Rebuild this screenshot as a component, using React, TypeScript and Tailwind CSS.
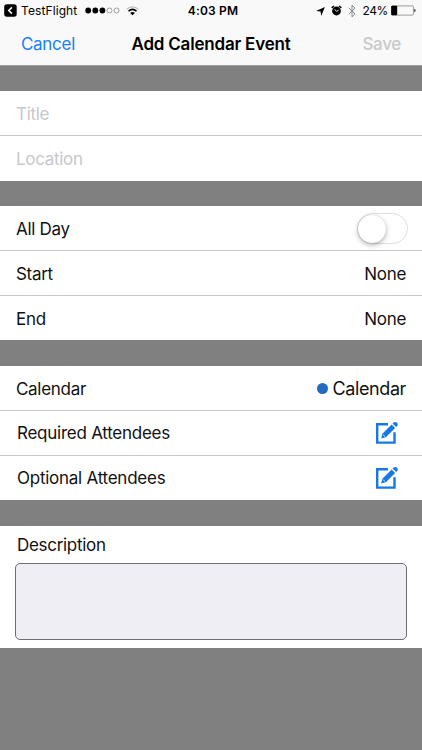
import type { ReactNode } from "react";
import { clsx } from "clsx";

function Row({ className, children }: { className?: string; children: ReactNode }) {
  return (
    <div
      className={clsx(
        "flex h-[45px] items-center justify-between border-b border-[#c8c8c8] pt-px pr-4 pl-4 last:h-[44px] last:border-b-0",
        className,
      )}
    >
      {children}
    </div>
  );
}

function Section({ children }: { children: ReactNode }) {
  return <section className="mb-[26px] bg-white">{children}</section>;
}

function Wifi() {
  return (
    <svg width="13" height="10" viewBox="0 0 13 10" fill="none">
      <path d="M.7 3.2C4 .1 9 .1 12.3 3.2" stroke="#bdbdbd" strokeWidth="1.3" />
      <path d="M2.5 5.1c2.4-2.1 5.6-2.1 8 0" stroke="#000" strokeWidth="1.5" />
      <path d="M4.1 6.9c1.5-1.3 3.3-1.3 4.8 0L6.5 9.3z" fill="#000" />
    </svg>
  );
}

function StatusBar() {
  return (
    <div className="grid h-[22px] grid-cols-[1fr_auto_1fr] items-center pr-1.5 pl-1 text-[12px] leading-none">
      <div className="flex items-center">
        <svg className="-mt-[2px]" width="13" height="13" viewBox="0 0 13 13" fill="none">
          <rect width="12.5" height="12.5" x=".2" y=".2" rx="2.6" fill="#000" />
          <path d="M7.9 3.4 4.8 6.5l3.1 3.1" stroke="#fff" strokeWidth="1.6" />
        </svg>
        <span className="ml-1 w-[56px] tracking-[0.1px] whitespace-nowrap">TestFlight</span>
        <svg className="-mt-[1px] ml-[8px]" width="35" height="7" viewBox="0 0 35 7">
          <circle cx="3.2" cy="3.5" r="2.9" />
          <circle cx="10.3" cy="3.5" r="2.9" />
          <circle cx="17.4" cy="3.5" r="2.9" />
          <circle cx="24.5" cy="3.5" r="2.5" fill="none" stroke="#777" strokeWidth=".7" />
          <circle cx="31.6" cy="3.5" r="2.5" fill="none" stroke="#777" strokeWidth=".7" />
        </svg>
        <span className="-mt-[1px] ml-[6px]">
          <Wifi />
        </span>
      </div>
      <span className="pl-[6px] font-semibold tracking-[0.15px]">4:03 PM</span>
      <div className="flex items-center justify-end">
        <svg width="9" height="9" viewBox="0 0 9 9">
          <path d="M8.9.1 5.2 8.9 4.6 4.5.1 3.9z" />
        </svg>
        <svg className="-mt-[1px] ml-[6px]" width="11" height="11" viewBox="0 0 11 11" fill="none">
          <circle cx="5.5" cy="6" r="4.4" fill="#000" />
          <path d="M.7 2.9 3 1M10.3 2.9 8 1" stroke="#000" strokeWidth="1.5" />
          <path d="m3.6 4.4 2 1.9 2-1.1" stroke="#fff" strokeWidth=".9" />
        </svg>
        <svg className="ml-[6px]" width="8" height="14" viewBox="0 0 8 14" fill="none">
          <path d="m.8 3.8 6.2 6.1L4 12.8V1.2l3 2.9-6.2 6.1" stroke="#858585" strokeWidth="1" />
        </svg>
        <span className="ml-[7px] tracking-[-0.4px]">24%</span>
        <svg className="-mt-px ml-[3px]" width="25" height="11" viewBox="0 0 25 11">
          <rect x=".4" y=".9" width="22" height="9.2" rx="1" fill="none" stroke="#777" strokeWidth=".7" />
          <rect x=".2" y=".7" width="6" height="9.6" rx="1" />
          <path d="M23.4 3.8c1.5.4 1.5 3 0 3.4z" />
        </svg>
      </div>
    </div>
  );
}

function EditIcon() {
  return (
    <svg className="mr-[7px]" width="24" height="24" viewBox="0 0 24 24" fill="none">
      <path d="M13 3.2H2.2v18.4h17.3v-10.4" stroke="#1678e5" strokeWidth="2.4" />
      <path d="m6.2 17.6 1.2-4.9 9.2-9.1 3.5 3.5-9.2 9.2z" fill="#1678e5" />
      <path d="m17.6 2.6 1.1-1.1c2.2-1.8 5.4 1.3 3.5 3.5l-1.1 1.1z" fill="#1678e5" />
      <path d="m8.2 13.8 1.8 1.8" stroke="#fff" strokeWidth=".8" />
    </svg>
  );
}

export default function App() {
  return (
    <div className="flex h-[750px] w-[422px] flex-col overflow-hidden bg-[#808080] font-['Inter',sans-serif] text-[17px] leading-5 tracking-[-0.3px] text-[#111]">
      <header className="mb-[25px] h-[66px] shrink-0 border-b border-[#a0a0a0] bg-[#f9f9f9] text-black">
        <StatusBar />
        <div className="grid h-[43px] grid-cols-[1fr_auto_1fr] items-center px-[21px]">
          <button className="justify-self-start text-[#1681f6]">Cancel</button>
          <h1 className="font-semibold tracking-[-0.2px]">Add Calendar Event</h1>
          <button className="justify-self-end font-medium text-[#c9c9c9]">Save</button>
        </div>
      </header>

      <Section>
        <Row className="text-[#c7c7cc]">Title</Row>
        <Row className="pt-0 text-[#c7c7cc] last:h-[45px]">Location</Row>
      </Section>

      <div className="-mt-px">
        <Section>
          <Row>
            <span>All Day</span>
            <button
              role="switch"
              aria-checked={false}
              className="-mr-[2px] flex h-[31px] w-[51px] items-center rounded-full border-[1.5px] border-[#dedede] bg-white"
            >
              <span className="size-[28px] rounded-full bg-white shadow-[0_2px_5px_rgba(0,0,0,0.3),0_0_1px_rgba(0,0,0,0.2)]" />
            </button>
          </Row>
          <Row>
            <span>Start</span>
            <span>None</span>
          </Row>
          <Row>
            <span>End</span>
            <span>None</span>
          </Row>
        </Section>
      </div>

      <Section>
        <Row>
          <span>Calendar</span>
          <span className="flex items-center gap-[5px] text-[18px] tracking-[-0.4px]">
            <span className="size-[11px] rounded-full bg-[#216cc0]" />
            Calendar
          </span>
        </Row>
        <Row className="pt-0 pb-px pl-[17px] tracking-[-0.25px]">
          <span>Required Attendees</span>
          <EditIcon />
        </Row>
        <Row className="pt-0 pb-px pl-[17px] tracking-[-0.25px]">
          <span>Optional Attendees</span>
          <EditIcon />
        </Row>
      </Section>

      <section className="h-[122px] bg-white px-[15px] pt-[9px]">
        <label htmlFor="description" className="block pl-[2px]">
          Description
        </label>
        <textarea
          id="description"
          className="mt-2 block h-[77px] w-full resize-none rounded-[5px] border border-[#6d6d72] bg-[#efeef5]"
        />
      </section>
    </div>
  );
}
